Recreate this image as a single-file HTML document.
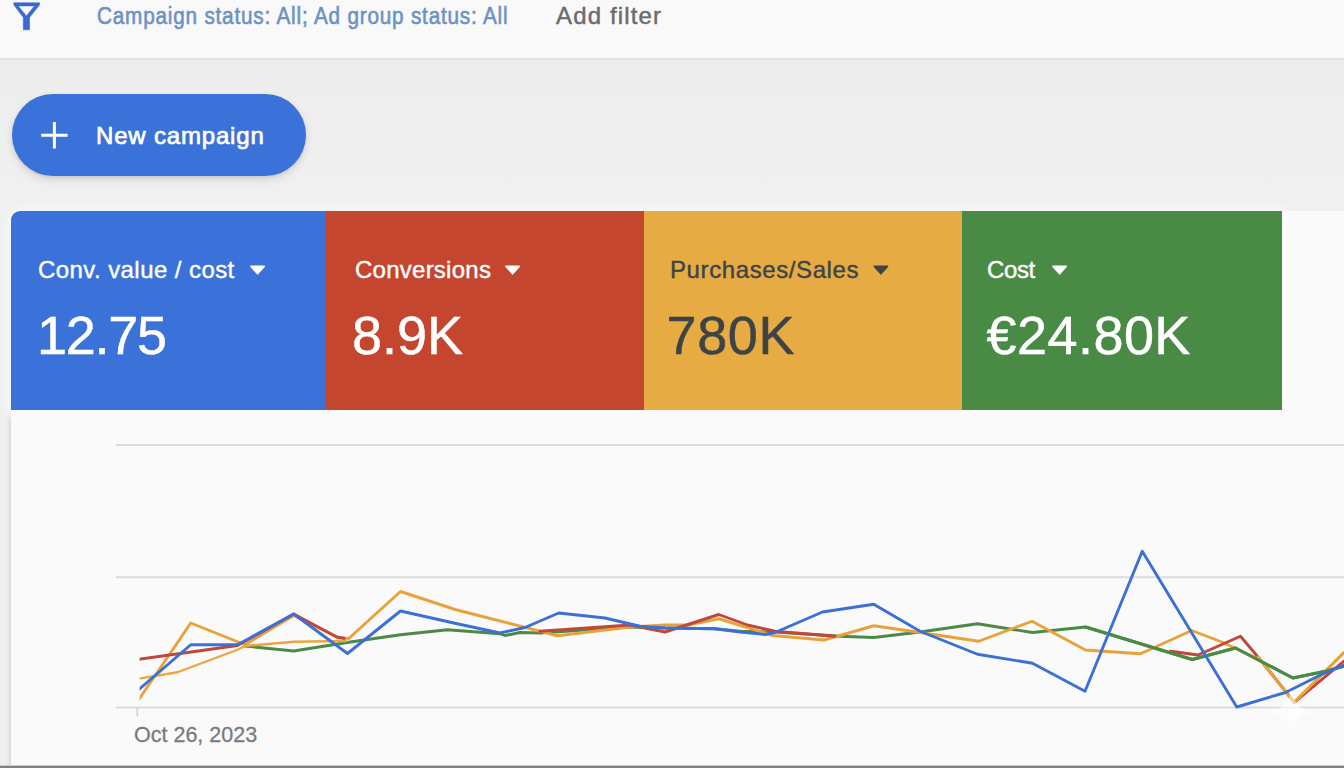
<!DOCTYPE html>
<html lang="en">
<head>
<meta charset="utf-8">
<title>Campaigns</title>
<style>
*{box-sizing:border-box;margin:0;padding:0}
html,body{width:1344px;height:768px;overflow:hidden}
body{background:linear-gradient(#ededed 0,#ededed 61px,#f0f0f0 200px,#f0f0f0 100%);font-family:"Liberation Sans",Arial,sans-serif;position:relative}
.abs{position:absolute;white-space:nowrap;line-height:1}
#topbar{position:absolute;left:0;top:0;width:1344px;height:60.4px;background:#f9f9f9;border-bottom:2.4px solid #e2e2e2}
#status{left:96.5px;top:4.5px;font-size:23px;letter-spacing:.9px;color:#6c92c5;-webkit-text-stroke:.6px #6c92c5;transform-origin:0 0;transform:scaleX(.9)}
#addf{left:556px;top:4px;font-size:24px;letter-spacing:1.15px;color:#6b6b6b;-webkit-text-stroke:.45px #6b6b6b}
#btn{position:absolute;left:12.4px;top:94.2px;width:294px;height:82px;border-radius:41px;background:#3b72d9;box-shadow:0 4px 9px rgba(0,0,0,.11),0 1px 3px rgba(0,0,0,.09)}
#btnt{left:96px;top:124px;font-size:24px;color:#fff;-webkit-text-stroke:.7px #fff;letter-spacing:.82px}
#card{position:absolute;left:11.4px;top:211.2px;width:1340px;height:555px;background:#fafafa;border-top-left-radius:9px}
#cardsh{position:absolute;left:11.4px;top:418px;width:1340px;height:360px;box-shadow:-1px 0 5px rgba(0,0,0,.14)}
#halo{position:absolute;left:11.4px;top:211.2px;width:1270.3px;height:199px;border-top-left-radius:9px;box-shadow:0 0 8px 4px rgba(255,255,255,.45)}
.tile{position:absolute;top:211.2px;height:199px}
.lbl{font-size:24px;color:#fff;-webkit-text-stroke:.4px currentColor}
.val{font-size:54px;color:#fff;-webkit-text-stroke:.5px currentColor}
#bottom{position:absolute;left:0;top:765px;width:1344px;height:3px;background:linear-gradient(#c9cbce 0,#c9cbce 1px,#7e8187 1px)}
</style>
</head>
<body>
<div id="topbar"></div>
<svg class="abs" style="left:0;top:0" width="48" height="36" viewBox="0 0 48 36"><path fill-rule="evenodd" d="M13.8 2.8H39.6V4.8L29.5 17.5V29.8H23.3V17.5L13.8 4.8Z M18.2 5.9H34.5L26.35 15.9Z" fill="#3a69cf" stroke="#3a69cf" stroke-width=".6" stroke-linejoin="round"/></svg>
<div id="status" class="abs">Campaign status: All; Ad group status: All</div>
<div id="addf" class="abs">Add filter</div>

<div id="btn"></div>
<svg class="abs" style="left:40px;top:121px" width="29" height="29" viewBox="0 0 29 29"><path d="M14.4 1 V27.6 M1.2 14.2 H27.6" stroke="#fff" stroke-width="3" fill="none"/></svg>
<div id="btnt" class="abs">New campaign</div>

<div id="cardsh"></div>
<div id="halo"></div>
<div id="card"></div>
<div class="tile" style="left:11.4px;width:315px;background:#3b72d9;border-top-left-radius:9px"></div>
<div class="tile" style="left:326.4px;width:318px;background:#c5462f"></div>
<div class="tile" style="left:644.4px;width:317.8px;background:#e6ab42"></div>
<div class="tile" style="left:962.2px;width:319.5px;background:#498b45"></div>

<div class="abs lbl" id="l1" style="left:38px;top:258px;letter-spacing:.43px">Conv. value / cost</div>
<div class="abs lbl" id="l2" style="left:355px;top:258px;letter-spacing:.25px">Conversions</div>
<div class="abs lbl" id="l3" style="left:670px;top:258px;letter-spacing:.6px;color:#3e4446">Purchases/Sales</div>
<div class="abs lbl" id="l4" style="left:987px;top:258px;letter-spacing:-.4px">Cost</div>
<div class="abs val" id="v1" style="left:37px;top:307.5px;letter-spacing:-1.3px">12.75</div>
<div class="abs val" id="v2" style="left:352px;top:307.5px">8.9K</div>
<div class="abs val" id="v3" style="left:666.5px;top:307.5px;letter-spacing:.6px;color:#3e4446">780K</div>
<div class="abs val" id="v4" style="left:986.5px;top:307.5px;letter-spacing:.45px">€24.80K</div>

<svg class="abs" style="left:0;top:0" width="1344" height="768" viewBox="0 0 1344 768">
<g fill="#fff" stroke="#fff" stroke-width="1.6" stroke-linejoin="round">
<path d="M251 266.4h13.2l-6.6 7.4z"/>
<path d="M506 266.4h13.2l-6.6 7.4z"/>
<path d="M874.3 266.4h13.2l-6.6 7.4z" fill="#3e4446" stroke="#3e4446"/>
<path d="M1053 266.4h13.2l-6.6 7.4z"/>
</g>
<g stroke="#dcdcdc" stroke-width="2" fill="none">
<path d="M115.7 445H1344M115.7 577.2H1344M115.7 707.6H1344"/>
<path d="M137.3 708V716.5" stroke-width="1.6" stroke="#d2d2d2"/>
</g>
<clipPath id="cp"><rect x="139.6" y="420" width="1210" height="300"/></clipPath>
<g fill="none" stroke-width="2.9" stroke-linejoin="round" stroke-linecap="round" clip-path="url(#cp)">
<polyline id="green" stroke="#4a8a45" points="245,646 293.75,651 348.75,642.25 400.5,634.75 447.5,629.75 500,633.75 505,635.5 520,632.5 540,633 630,627 665,628 715,628.75 740,631.25 775,632 840,636.25 873.75,637.5 920,632 977.5,623.75 1032.5,632.5 1085.5,627 1192.25,659.5 1235.5,648 1293,678 1325.5,671.25 1344,666.25"/>
<polyline id="orangeB" stroke="#eba640" stroke-width="2.4" points="138,678.8 177.5,672.25 237.5,649.75 245,646 293.75,641.75 346,641"/>
<polyline id="orange" stroke="#e9a23a" points="138,700.7 190.75,623 245,644.75 293.75,615.5 320,628.5 337.5,637.5 348.75,638.5 400.5,591.5 456,609.75 557.5,635.75 630,627 665,625 687.5,625 718.75,618.75 772.5,635.5 823.75,640 840,635.5 873.75,625.75 920,632.5 978.75,641.25 1032,621.25 1085.5,650 1140.5,653.75 1191.75,630.5 1223,642.5 1260.5,660 1294.25,702.3 1344,652.5"/>
<polyline id="red1" stroke="#c0473a" points="138,659.3 237.5,645.5 293.75,614 320,628 337.5,637.25 344,638.2"/>
<polyline id="red2" stroke="#c0473a" points="540,631.25 630,625 665,632 718.75,614.5 747.5,625 775,631.25 835,636.25"/>
<polyline id="red3" stroke="#c0473a" points="1170.5,651.25 1198,655 1240.5,636.25 1260.5,660 1294.25,702.3 1344,661"/>
<polyline id="orange2" stroke="#e9a23a" points="1258,657 1294.25,702.3 1344,652.5"/>
<polyline id="green2" stroke="#4a8a45" points="1085.5,627 1192.25,659.5 1235.5,648 1293,678 1325.5,671.25 1344,666.25"/>
<polyline id="blue" stroke="#3b70d6" points="138,690.2 190.75,644.75 237.5,644.75 293.75,614 347.5,653.5 400.5,611 456,623.5 500,633 525,627.5 558.75,613 605,618 640,626.25 665,628 715,628.75 740,632 765,634.5 775,632.5 822.5,612 873.75,604.25 920,631.25 977.5,654.25 1032.5,663.25 1085,691.25 1142.25,551.25 1236.75,707 1285.5,692.5 1320.5,675 1344,665"/>
</g>
<path d="M1291 689Q1293 710 1316 712Q1293 714 1291 736Q1289 714 1266 712Q1289 710 1291 689Z" fill="#fff" opacity=".55"/>
</svg>
<div class="abs" id="date" style="left:134px;top:725.3px;font-size:21.5px;color:#7a7a7a;-webkit-text-stroke:.3px #7a7a7a">Oct 26, 2023</div>
<div id="bottom"></div>
</body>
</html>
